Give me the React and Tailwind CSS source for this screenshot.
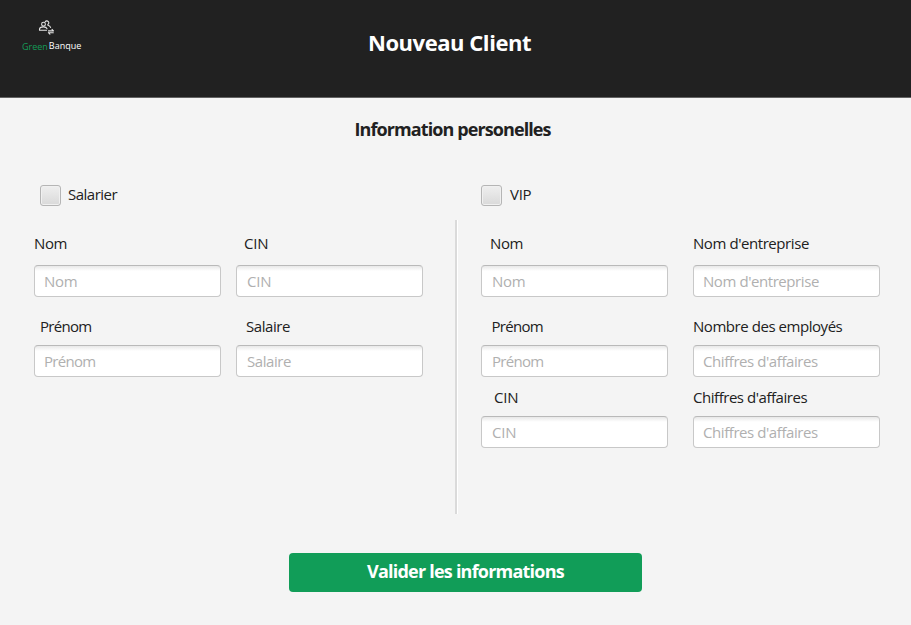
import React from 'react';

function Field({ label, placeholder, labelClass = '', inputClass = 'mt-[9px]', pad = 'px-[9px]', fit = '', phFit = '' }) {
  return (
    <label className="block w-[187px]">
      <span className={`-mt-px block h-5 whitespace-nowrap text-[15px] leading-5 text-[#212121] ${labelClass}`}>
        <span className={fit}>{label}</span>
      </span>
      <input
        type="text"
        placeholder={placeholder}
        className={`block h-8 w-[187px] rounded-[4px] border border-[#c8c8c8] border-t-[#b9b9b9] bg-white bg-[linear-gradient(#e8e8e8,#ffffff_5px)] pb-px text-[15px] text-[#212121] outline-none placeholder:text-[#b0b0b0] placeholder:opacity-100 ${pad} ${inputClass} ${phFit}`}
      />
    </label>
  );
}

function Check({ label, gap = 'gap-[7px]', fit = '' }) {
  return (
    <label className={`flex h-[22px] items-center text-[15px] leading-5 text-[#212121] ${gap}`}>
      <input
        type="checkbox"
        className="h-[21px] w-[21px] appearance-none rounded-[3px] border border-[#b5b5b5] bg-[linear-gradient(#efefef,#d9d9d9)] shadow-[inset_0_0_0_1px_#f0f0f0]"
      />
      <span className={`-mt-[3px] ${fit}`}>{label}</span>
    </label>
  );
}

function Logo() {
  return (
    <div className="ml-[22px] mt-5 h-9 w-[62px]">
      <svg viewBox="0 0 18 16" className="ml-4 h-4 w-[18px]" fill="none" stroke="#e4e4e4" strokeWidth="1.1" strokeLinecap="round" strokeLinejoin="round">
        <circle cx="5.5" cy="4.2" r="1.9" />
        <path d="M1.5 10.3v-.7c0-1.8 1.4-2.7 4-2.7 2 0 3.2.7 3.6 1.9M1.5 10.3h7" />
        <path d="M7.2 1.7A2 2 0 1 1 9.8 4.6M9.8 5.2c1.7.3 2.6 1.1 2.8 2.3" />
        <path d="M10.5 10.9h4.8M14 9.4l1.5 1.5M15.3 12.7h-4.8M10.4 12.7l1.5 1.5" />
      </svg>
      <div className="mt-1 flex h-3 gap-[1px] whitespace-nowrap text-[9px] leading-3">
        <span className="mt-px text-[#149c58]">Green</span>
        <span className="text-white">Banque</span>
      </div>
    </div>
  );
}

export default function App() {
  return (
    <div className="flex h-[625px] w-[911px] flex-col overflow-hidden bg-[#f4f4f4] font-['Open_Sans','Noto_Sans',sans-serif]">
      <header className="grid h-[98px] shrink-0 grid-cols-[356px_187px_1fr] border-b border-[#636363] bg-[#212121]">
        <Logo />
        <h1 className="mt-[26px] whitespace-nowrap text-center text-[22px] font-bold leading-8 tracking-[-0.45px] text-white">Nouveau Client</h1>
      </header>
      <h2 className="ml-[-6px] mt-[19px] h-6 text-center text-[18px] font-bold leading-6 tracking-[-0.9px] text-[#212121]">Information personelles</h2>
      <main className="mt-[43px] flex h-[330px] shrink-0">
        <section className="w-[456px] pl-[34px]">
          <div className="pl-[6px]"><Check label="Salarier" fit="tracking-[-0.5px]" /></div>
          <div className="mt-[28px] grid grid-cols-[187px_187px] gap-x-[15px]">
            <Field label="Nom" placeholder="Nom" inputClass="mt-3" fit="tracking-[-0.4px]" phFit="tracking-[-0.3px]" />
            <Field label="CIN" placeholder="CIN" labelClass="pl-2" inputClass="mt-3" pad="px-[10px]" fit="tracking-[-0.2px]" phFit="tracking-[-0.2px]" />
          </div>
          <div className="mt-5 grid grid-cols-[187px_187px] gap-x-[15px]">
            <Field label="Prénom" placeholder="Prénom" labelClass="pl-[6px]" fit="tracking-[-0.7px]" phFit="tracking-[-0.7px]" />
            <Field label="Salaire" placeholder="Salaire" labelClass="pl-[10px]" pad="px-[10px]" fit="tracking-[-0.45px]" phFit="tracking-[-0.45px]" />
          </div>
        </section>
        <div className="-ml-px mt-[36px] h-[294px] w-[3px] border-l-2 border-[#dadada] bg-white" />
        <section className="pl-[23px]">
          <Check label="VIP" gap="gap-2" fit="tracking-[-0.3px]" />
          <div className="mt-[28px] grid grid-cols-[187px_187px] gap-x-[25px]">
            <Field label="Nom" placeholder="Nom" labelClass="pl-[9px]" inputClass="mt-3" pad="px-[10px]" fit="tracking-[-0.4px]" phFit="tracking-[-0.3px]" />
            <Field label="Nom d'entreprise" placeholder="Nom d'entreprise" inputClass="mt-3" fit="tracking-[-0.43px]" phFit="tracking-[-0.43px]" />
          </div>
          <div className="mt-5 grid grid-cols-[187px_187px] gap-x-[25px]">
            <Field label="Prénom" placeholder="Prénom" labelClass="pl-[10.5px]" pad="px-[10px]" fit="tracking-[-0.7px]" phFit="tracking-[-0.7px]" />
            <Field label="Nombre des employés" placeholder="Chiffres d'affaires" fit="tracking-[-0.45px]" phFit="tracking-[-0.43px]" />
          </div>
          <div className="mt-[11px] grid grid-cols-[187px_187px] gap-x-[25px]">
            <Field label="CIN" placeholder="CIN" labelClass="pl-[13px]" pad="px-[10px]" fit="tracking-[-0.2px]" phFit="tracking-[-0.2px]" />
            <Field label="Chiffres d'affaires" placeholder="Chiffres d'affaires" fit="tracking-[-0.46px]" phFit="tracking-[-0.43px]" />
          </div>
        </section>
      </main>
      <button type="button" className="ml-[289px] mt-[39px] h-[39px] w-[353px] shrink-0 rounded-[4px] bg-[#119d58] pb-[3px] text-[18px] font-bold leading-6 tracking-[-0.78px] text-white">
        Valider les informations
      </button>
    </div>
  );
}
